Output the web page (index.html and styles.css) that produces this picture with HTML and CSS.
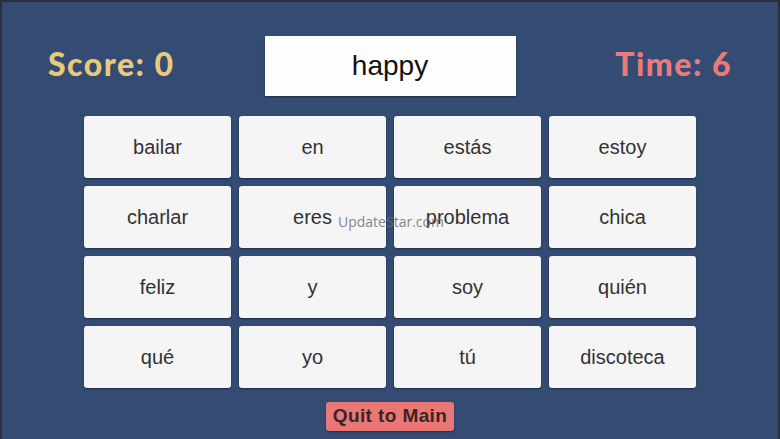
FILE: index.html
```html
<!DOCTYPE html>
<html>
<head>
<meta charset="utf-8">
<link rel="stylesheet" href="styles.css">
</head>
<body>
<div class="screen">
  <div class="topbar">
    <div class="score">Score: 0</div>
    <div class="word">happy</div>
    <div class="time">Time: 6</div>
  </div>
  <div class="grid">
    <div class="card">bailar</div>
    <div class="card">en</div>
    <div class="card">estás</div>
    <div class="card">estoy</div>
    <div class="card">charlar</div>
    <div class="card">eres</div>
    <div class="card">problema</div>
    <div class="card">chica</div>
    <div class="card">feliz</div>
    <div class="card">y</div>
    <div class="card">soy</div>
    <div class="card">quién</div>
    <div class="card">qué</div>
    <div class="card">yo</div>
    <div class="card">tú</div>
    <div class="card">discoteca</div>
  </div>
  <div class="footer">
    <div class="quit">Quit to Main</div>
  </div>
  <div class="watermark">UpdateStar.com</div>
</div>
</body>
</html>
```
FILE: styles.css
```css
html, body {
  margin: 0;
  padding: 0;
  width: 780px;
  height: 439px;
  overflow: hidden;
}
body {
  background: #2b2f37;
  font-family: "Liberation Sans", Arial, sans-serif;
}
.screen {
  position: relative;
  box-sizing: border-box;
  width: 776px;
  height: 437px;
  margin: 2px 2px 0 2px;
  background: #344c74;
}
.topbar {
  display: grid;
  grid-template-columns: 1fr auto 1fr;
  align-items: center;
  padding: 34px 46px 0 46px;
}
.score, .time {
  font-family: Lato, "DejaVu Sans", sans-serif;
  font-weight: 900;
  font-size: 32px;
  letter-spacing: 1.5px;
  margin-top: -6px;
}
.score {
  color: #e9c97a;
  justify-self: start;
}
.time {
  color: #ec7b78;
  justify-self: end;
}
.word {
  width: 251px;
  height: 60px;
  background: #fefefe;
  display: flex;
  align-items: center;
  justify-content: center;
  font-size: 28px;
  color: #111;
  box-shadow: 0 1px 2px rgba(0, 0, 0, 0.45);
}
.grid {
  display: grid;
  grid-template-columns: repeat(4, 147px);
  grid-auto-rows: 62px;
  column-gap: 8px;
  row-gap: 8px;
  justify-content: center;
  margin-top: 20px;
}
.card {
  background: #f5f5f5;
  border-radius: 3px;
  display: flex;
  align-items: center;
  justify-content: center;
  font-size: 20px;
  color: #323232;
  box-shadow: 0 1px 2px rgba(0, 0, 0, 0.45);
  padding-top: 1px;
  box-sizing: border-box;
}
.footer {
  display: flex;
  justify-content: center;
  margin-top: 14px;
}
.quit {
  background: #ea7775;
  color: #3a2526;
  font-weight: bold;
  font-size: 19px;
  letter-spacing: 0.4px;
  padding: 3px 7px 4px 7px;
  border-radius: 3px;
  box-shadow: 0 1px 2px rgba(0, 0, 0, 0.4);
}
.watermark {
  position: absolute;
  left: 336px;
  top: 210px;
  font-family: "Open Sans", "DejaVu Sans", sans-serif;
  font-size: 14px;
  color: rgba(110, 110, 110, 0.85);
}
```
